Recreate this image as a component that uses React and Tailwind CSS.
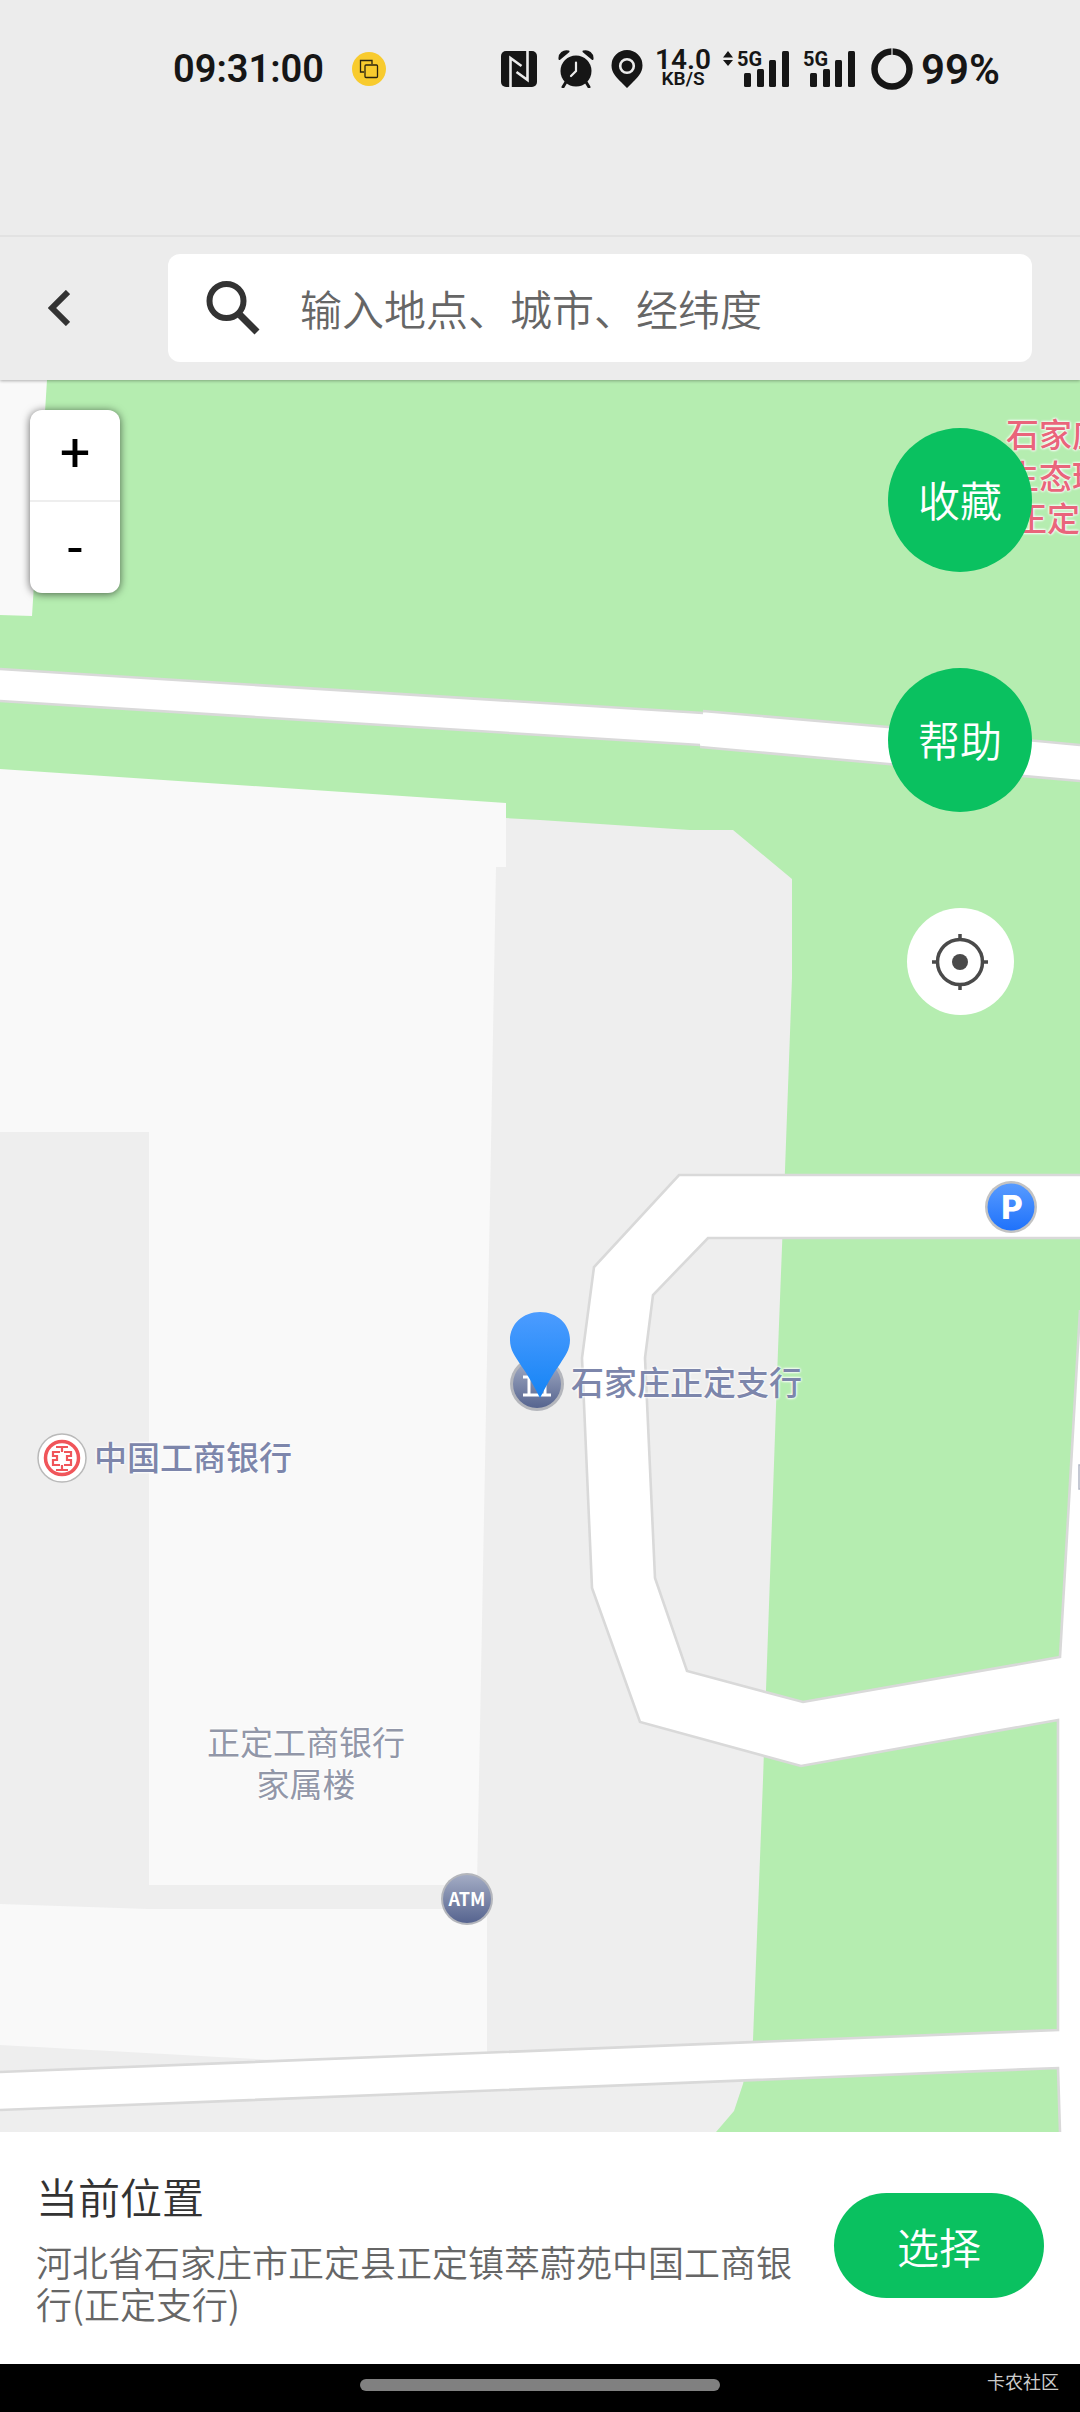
import React, { useState } from 'react';

const mapLabels = [
  { id: 'branch', text: '石家庄正定支行', className: 'left-[571px] top-[980px] text-[#7d86ab]' },
  { id: 'icbc', text: '中国工商银行', className: 'left-[94px] top-[1055px] text-[#7d86ab]' },
];

const NfcIcon = () => (
  <svg className="h-9 w-9" viewBox="0 0 36 36" fill="none">
    <rect width="36" height="36" rx="5" fill="#161616" />
    <path d="M9.5 36V7l11 8M26.5 0v29l-11-8" stroke="#ececec" strokeWidth="2.6" />
  </svg>
);

const AlarmIcon = () => (
  <svg className="h-[38px] w-[38px]" viewBox="0 0 38 38" fill="none">
    <circle cx="19" cy="21" r="15.5" fill="#161616" />
    <path d="M2.500 9a7 7 0 0 1 9-7.500zM35.500 9a7 7 0 0 0-9-7.500z" fill="#161616" stroke="#161616" strokeWidth="2" strokeLinejoin="round" />
    <path d="M9 32l-3 5M29 32l3 5" stroke="#161616" strokeWidth="3" strokeLinecap="round" />
    <path d="M19 12.500V21l-5 5" stroke="#ececec" strokeWidth="2.200" strokeLinecap="round" />
  </svg>
);

const PlaceIcon = () => (
  <svg className="h-[38px] w-8" viewBox="0 0 32 38">
    <path d="M16 0a15.500 15.500 0 0 0-15.500 15.500C.5 23 6 28 10 32l6 6 6-6c4-4 9.500-9 9.500-16.500A15.500 15.500 0 0 0 16 0z" fill="#161616" />
    <circle cx="16" cy="16" r="6.800" fill="#161616" stroke="#ececec" strokeWidth="2.600" />
  </svg>
);

const Signal = ({ arrows }) => (
  <div className="relative h-9">
    <svg className="h-9 w-[66px]" viewBox="0 0 66 36" fill="#161616">
      {arrows && <path d="M0 6.500L5 0l5 6.500zM0 9h10l-5 6z" />}
      <rect x="21" y="22" width="7" height="14" rx="1.500" />
      <rect x="34" y="18" width="7" height="18" rx="1.500" />
      <rect x="46" y="9" width="7" height="27" rx="1.500" />
      <rect x="59" y="0" width="7" height="36" rx="1.500" />
    </svg>
    <span className="absolute top-0 left-[14px] text-[20px] leading-4 font-bold">5G</span>
  </div>
);

const BatteryIcon = () => (
  <svg className="h-[42px] w-[42px]" viewBox="0 0 42 42" fill="none">
    <circle cx="21" cy="21" r="17.500" stroke="#161616" strokeWidth="6.500" />
    <path d="M21 0v7" stroke="#ececec" strokeWidth="1.200" />
  </svg>
);

const StatusBar = () => (
  <div className="flex h-[138px] items-center justify-between pr-20 pl-[173px] font-['Roboto',sans-serif] text-[#161616]">
    <div className="flex items-center gap-7">
      <span className="text-[38px] font-semibold">09:31:00</span>
      <svg className="h-[34px] w-[34px]" viewBox="0 0 34 34" fill="none">
        <circle cx="17" cy="17" r="17" fill="#f8cb2e" />
        <path d="M12 20H8.500V8.500H20V12" stroke="#2a2410" strokeWidth="1.300" />
        <rect x="13" y="13" width="12.500" height="12.500" rx="1" stroke="#2a2410" strokeWidth="1.300" />
      </svg>
    </div>
    <div className="flex items-center">
      <NfcIcon />
      <div className="ml-5"><AlarmIcon /></div>
      <div className="ml-4"><PlaceIcon /></div>
      <div className="ml-3 flex w-14 flex-col items-center font-semibold">
        <span className="text-[28px] leading-[20px]">14.0</span>
        <span className="text-[19px] leading-[18px]">KB/S</span>
      </div>
      <div className="ml-3"><Signal arrows /></div>
      <div><Signal /></div>
      <div className="ml-4"><BatteryIcon /></div>
      <span className="ml-2 text-[42px] font-semibold">99%</span>
    </div>
  </div>
);

const SearchHeader = () => (
  <div className="flex h-[145px] items-center border-t-2 border-[#e2e2e2] pr-12 pb-[2px]">
    <button type="button" aria-label="返回" className="flex w-[168px] shrink-0 pl-12">
      <svg className="h-9 w-[22px]" viewBox="0 0 22 36" fill="none">
        <path d="M20 2L4 18l16 16" stroke="#333" strokeWidth="6" />
      </svg>
    </button>
    <label className="flex h-[108px] flex-1 items-center rounded-xl bg-white pl-[38px]">
      <svg className="h-[54px] w-[54px] shrink-0" viewBox="0 0 54 54" fill="none" stroke="#333" strokeWidth="6">
        <circle cx="20.500" cy="20" r="17" />
        <path d="M34 34l17 17" strokeWidth="7" />
      </svg>
      <input
        type="text"
        aria-label="搜索"
        placeholder="输入地点、城市、经纬度"
        className="ml-10 w-full min-w-0 bg-transparent text-[42px] font-[350] text-[#333] outline-none placeholder:text-[#666]"
      />
    </label>
  </div>
);

const MapTiles = () => (
  <svg className="absolute inset-0 h-full w-full" viewBox="0 380 1080 1752" preserveAspectRatio="xMidYMid slice">
    <defs>
      <linearGradient id="pinBlue" x1="0" y1="0" x2="0" y2="1">
        <stop offset="0" stopColor="#4c9cff" />
        <stop offset="1" stopColor="#1584f5" />
      </linearGradient>
      <linearGradient id="parkBlue" x1="0" y1="0" x2="0" y2="1">
        <stop offset="0" stopColor="#589bff" />
        <stop offset="1" stopColor="#1f72fb" />
      </linearGradient>
      <linearGradient id="bankGrey" x1="0" y1="0" x2="0" y2="1">
        <stop offset="0" stopColor="#a3acc4" />
        <stop offset="1" stopColor="#56648f" />
      </linearGradient>
    </defs>

    {/* ground */}
    <rect y="380" width="1080" height="1752" fill="#b5edb0" />
    <path d="M0 780L505 818L540 820L690 830H733L792 879V978L785 1170L778 1350L766 1690L763 1780L753 2040L743 2084L734 2111L716 2132H0z" fill="#eeeeee" />
    <path d="M0 380H47L32 616L0 615z" fill="#f9f9f9" />
    <path d="M0 769L506 803V867H496L490 1200L477 1885H149V1132H0z" fill="#f9f9f9" />
    <path d="M0 1904L148 1909H487V2062H310L0 2045z" fill="#f9f9f9" />

    {/* roads */}
    <g fill="#fff">
      <path d="M0 669L703 713V745L0 701z" />
      <path d="M703 711L888 727L1080 745V781L888 764L700 747z" />
      <path d="M1080 1175H679L594 1267L582 1358L592 1588L640 1722L801 1766L1058 1720V2030L0 2072V2110L1058 2068L1060 2132H1080V1310L1060 1657L803 1702L687 1671L655 1578L645 1358L653 1295L708 1238H1080z" />
    </g>
    <g fill="none" stroke="#d9d9d9" strokeWidth="2.600">
      <path d="M0 669L703 713M703 711L888 727L1080 745M0 701L700 745M700 747L888 764L1080 781" />
      <path d="M1080 1175H679L594 1267L582 1358L592 1588L640 1722L801 1766L1058 1720V2030L0 2072" />
      <path d="M1080 1238H708L653 1295L645 1358L655 1578L687 1671L803 1702L1060 1657L1080 1310" />
      <path d="M0 2110L1058 2068L1060 2132" />
    </g>
    <path d="M1080 1465H1079V1489H1080" stroke="#b3b8c6" strokeWidth="1.500" fill="none" />

    {/* parking */}
    <circle cx="1011" cy="1207" r="26" fill="#c3c3c3" />
    <circle cx="1011" cy="1207" r="23.500" fill="url(#parkBlue)" />
    <text x="1012" y="1219" textAnchor="middle" fill="#fff" className="font-['Inter',sans-serif] text-[33px] font-extrabold">P</text>

    {/* atm */}
    <circle cx="467" cy="1899" r="26" fill="#b4b6bc" />
    <circle cx="467" cy="1899" r="24" fill="url(#bankGrey)" />
    <text x="467" y="1906" textAnchor="middle" fill="#fff" className="font-['Noto_Sans_CJK_SC',sans-serif] text-[18px] font-bold">ATM</text>

    {/* icbc */}
    <circle cx="62" cy="1458" r="24" fill="#fff" stroke="#b9b9b9" strokeWidth="1.500" />
    <g fill="none" stroke="#f0555a">
      <circle cx="62" cy="1458" r="16.500" strokeWidth="3.500" />
      <path d="M56 1447H68M62 1447V1452M60 1452H53V1456H57V1460H53V1465H60M64 1452H71V1456H67V1460H71V1465H64M62 1465V1470M56 1470H68" strokeWidth="2.200" />
    </g>

    {/* branch and current pin */}
    <circle cx="537" cy="1384" r="27" fill="#b4b6bc" />
    <circle cx="537" cy="1384" r="24" fill="url(#bankGrey)" />
    <path d="M523 1377h6v17M544 1377h1v17M523 1395h28" stroke="#fff" strokeWidth="3" fill="none" />
    <path d="M540 1312c-17 0-30 12-30 28 0 10 5 16 10 24 8 11 14 22 20 34 6-12 12-23 20-34 5-8 10-14 10-24 0-16-13-28-30-28z" fill="url(#pinBlue)" />
  </svg>
);

const App = () => {
  const [zoom, setZoom] = useState(18);

  return (
    <div className="flex min-h-screen flex-col bg-white font-['Noto_Sans_CJK_SC',sans-serif]">
      <header className="z-10 bg-[#ececec] shadow-[0_1px_3px_rgba(0,0,0,0.3)]">
        <div className="pb-[97px]">
          <StatusBar />
        </div>
        <SearchHeader />
      </header>

      <main className="relative flex-1 overflow-hidden" data-zoom={zoom}>
        <MapTiles />

        <div className="[text-shadow:0_0_3px_#fff,0_0_3px_#fff,0_0_2px_#fff]">
          {mapLabels.map((label) => (
            <span key={label.id} className={`absolute text-[33px] leading-[42px] font-medium whitespace-nowrap ${label.className}`}>
              {label.text}
            </span>
          ))}
          <div className="absolute top-[1340px] left-[207px] text-center text-[33px] leading-[42px] whitespace-nowrap text-[#9297a8]">
            <p>正定工商银行</p>
            <p>家属楼</p>
          </div>
          <div className="absolute top-8 left-[1006px] text-[33px] leading-[42px] font-medium whitespace-nowrap text-[#e9657b]">
            <p>石家庄</p>
            <p>生态环</p>
            <p className="pl-2">正定</p>
          </div>
        </div>

        <div className="absolute top-[30px] left-[30px] flex w-[90px] flex-col overflow-hidden rounded-xl bg-white font-['Roboto',sans-serif] text-[54px] leading-none text-black shadow-[0_1px_8px_rgba(0,0,0,0.6)]">
          <button type="button" aria-label="放大" onClick={() => setZoom(zoom + 1)} className="h-[92px] border-b-2 border-[#eee] pb-1">+</button>
          <button type="button" aria-label="缩小" onClick={() => setZoom(zoom - 1)} className="h-[91px]">-</button>
        </div>

        <div className="absolute top-12 right-12 flex flex-col items-center gap-24 text-[42px] text-white">
          <button type="button" className="h-36 w-36 rounded-full bg-[#0ac160] pb-1 font-[350]">收藏</button>
          <button type="button" className="h-36 w-36 rounded-full bg-[#0ac160] pb-1 font-[350]">帮助</button>
          <button type="button" aria-label="定位" className="flex h-[107px] w-[107px] items-center justify-center rounded-full bg-white">
            <svg className="h-14 w-14" viewBox="0 0 56 56" fill="none" stroke="#4a4a4a" strokeWidth="3.500">
              <circle cx="28" cy="28" r="22.500" />
              <circle cx="28" cy="28" r="8" fill="#4a4a4a" stroke="none" />
              <path d="M28 0v6M28 50v6M0 28h6M50 28h6" />
            </svg>
          </button>
        </div>
      </main>

      <section className="flex items-center justify-between bg-white pt-[34px] pr-9 pb-10 pl-9">
        <div className="max-w-[760px]">
          <h1 className="text-[42px] leading-[60px] font-[350] text-[#333]">当前位置</h1>
          <p className="mt-[14px] text-[36px] leading-[42px] font-[350] text-[#666]">
            河北省石家庄市正定县正定镇萃蔚苑中国工商银行(正定支行)
          </p>
        </div>
        <button type="button" className="h-[105px] w-[210px] shrink-0 rounded-full bg-[#0ac160] text-[42px] font-[350] text-white">选择</button>
      </section>

      <footer className="grid h-12 grid-cols-3 items-center bg-black pb-[6px]">
        <span />
        <div className="h-3 rounded-full bg-[#808080]" />
        <span className="pr-[21px] pb-2 text-right text-[18px] leading-6 text-[#ccc]">卡农社区</span>
      </footer>
    </div>
  );
};

export default App;
